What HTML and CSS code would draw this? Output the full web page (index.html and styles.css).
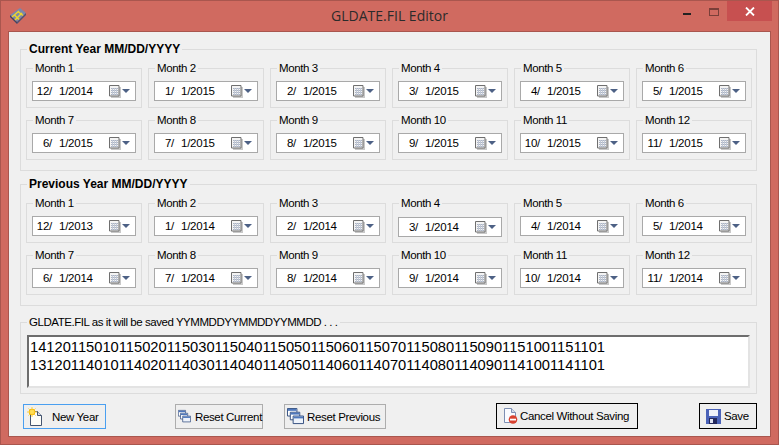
FILE: index.html
```html
<!DOCTYPE html>
<html lang="en">
<head>
<meta charset="utf-8">
<title>GLDATE.FIL Editor</title>
<link rel="stylesheet" href="styles.css">
</head>
<body>
<svg class="defs" width="0" height="0" aria-hidden="true">
  <symbol id="cal" viewBox="0 0 12 13">
    <path d="M2 2h10v11H2z" fill="#c9c9c9"/>
    <path d="M.5.5h9.5v10.5H.5z" fill="#f4f4f4" stroke="#6f6f6f"/>
    <path d="M2 3h7v1H2zM2 5h7v1H2zM2 7h7v1H2zM2 9h7v1H2z" fill="#aab3c4"/>
    <path d="M3 3h1v7H3zM5 3h1v7H5zM7 3h1v7H7z" fill="#c2c9d6"/>
  </symbol>
  <symbol id="windows" viewBox="0 0 18 18">
    <path d="M.5.5h10v8h-10z" fill="#fff" stroke="#2f4a7c"/><path d="M1 1h9v2H1z" fill="#4f78bd"/>
    <path d="M3.5 4.5h10v8h-10z" fill="#fff" stroke="#2f4a7c"/><path d="M4 5h9v2H4z" fill="#4f78bd"/>
    <path d="M6.5 8.5h11v8h-11z" fill="#eef3fb" stroke="#2f4a7c"/><path d="M7 9h10v2H7z" fill="#4f78bd"/>
  </symbol>
</svg>
<div class="window">
  <header class="titlebar">
    <svg class="appicon" width="17" height="16" viewBox="0 0 17 16" aria-hidden="true">
      <path d="M0 7 10 0l6 5-9 9z" fill="#7a88ad"/>
      <path d="M0 7l7 7v2L0 9z" fill="#3f4363"/>
      <path d="M7 14l9-9v2l-9 9z" fill="#4d5174"/>
      <path d="M2 9 9 3M5 12l7-7M4 6.5l5 5M8 3.5l5 4" fill="none" stroke="#ecd52c" stroke-width="1.5"/>
    </svg>
    <h1 class="title">GLDATE.FIL Editor</h1>
    <div class="controls">
      <span class="ctl-min"></span>
      <span class="ctl-max"></span>
      <span class="ctl-close">
        <svg width="10" height="9" viewBox="0 0 10 9" aria-hidden="true"><path d="M1 .5l8 8M9 .5l-8 8" stroke="#fff" stroke-width="1.8"/></svg>
      </span>
    </div>
  </header>
  <main class="client">
    <fieldset class="group">
      <legend class="group-title">Current Year MM/DD/YYYY</legend>
      <div class="months">
        <fieldset class="month"><legend>Month 1</legend><div class="date"><span class="m">12/</span><span class="y">1/2014</span><svg class="cal"><use href="#cal"/></svg><i class="arrow"></i></div></fieldset>
        <fieldset class="month"><legend>Month 2</legend><div class="date"><span class="m">1/</span><span class="y">1/2015</span><svg class="cal"><use href="#cal"/></svg><i class="arrow"></i></div></fieldset>
        <fieldset class="month"><legend>Month 3</legend><div class="date"><span class="m">2/</span><span class="y">1/2015</span><svg class="cal"><use href="#cal"/></svg><i class="arrow"></i></div></fieldset>
        <fieldset class="month"><legend>Month 4</legend><div class="date"><span class="m">3/</span><span class="y">1/2015</span><svg class="cal"><use href="#cal"/></svg><i class="arrow"></i></div></fieldset>
        <fieldset class="month"><legend>Month 5</legend><div class="date"><span class="m">4/</span><span class="y">1/2015</span><svg class="cal"><use href="#cal"/></svg><i class="arrow"></i></div></fieldset>
        <fieldset class="month"><legend>Month 6</legend><div class="date"><span class="m">5/</span><span class="y">1/2015</span><svg class="cal"><use href="#cal"/></svg><i class="arrow"></i></div></fieldset>
        <fieldset class="month"><legend>Month 7</legend><div class="date"><span class="m">6/</span><span class="y">1/2015</span><svg class="cal"><use href="#cal"/></svg><i class="arrow"></i></div></fieldset>
        <fieldset class="month"><legend>Month 8</legend><div class="date"><span class="m">7/</span><span class="y">1/2015</span><svg class="cal"><use href="#cal"/></svg><i class="arrow"></i></div></fieldset>
        <fieldset class="month"><legend>Month 9</legend><div class="date"><span class="m">8/</span><span class="y">1/2015</span><svg class="cal"><use href="#cal"/></svg><i class="arrow"></i></div></fieldset>
        <fieldset class="month"><legend>Month 10</legend><div class="date"><span class="m">9/</span><span class="y">1/2015</span><svg class="cal"><use href="#cal"/></svg><i class="arrow"></i></div></fieldset>
        <fieldset class="month"><legend>Month 11</legend><div class="date"><span class="m">10/</span><span class="y">1/2015</span><svg class="cal"><use href="#cal"/></svg><i class="arrow"></i></div></fieldset>
        <fieldset class="month"><legend>Month 12</legend><div class="date"><span class="m">11/</span><span class="y">1/2015</span><svg class="cal"><use href="#cal"/></svg><i class="arrow"></i></div></fieldset>
      </div>
    </fieldset>
    <fieldset class="group group-prev">
      <legend class="group-title">Previous Year MM/DD/YYYY</legend>
      <div class="months">
        <fieldset class="month"><legend>Month 1</legend><div class="date"><span class="m">12/</span><span class="y">1/2013</span><svg class="cal"><use href="#cal"/></svg><i class="arrow"></i></div></fieldset>
        <fieldset class="month"><legend>Month 2</legend><div class="date"><span class="m">1/</span><span class="y">1/2014</span><svg class="cal"><use href="#cal"/></svg><i class="arrow"></i></div></fieldset>
        <fieldset class="month"><legend>Month 3</legend><div class="date"><span class="m">2/</span><span class="y">1/2014</span><svg class="cal"><use href="#cal"/></svg><i class="arrow"></i></div></fieldset>
        <fieldset class="month"><legend>Month 4</legend><div class="date date-low"><span class="m">3/</span><span class="y">1/2014</span><svg class="cal"><use href="#cal"/></svg><i class="arrow"></i></div></fieldset>
        <fieldset class="month"><legend>Month 5</legend><div class="date"><span class="m">4/</span><span class="y">1/2014</span><svg class="cal"><use href="#cal"/></svg><i class="arrow"></i></div></fieldset>
        <fieldset class="month"><legend>Month 6</legend><div class="date"><span class="m">5/</span><span class="y">1/2014</span><svg class="cal"><use href="#cal"/></svg><i class="arrow"></i></div></fieldset>
        <fieldset class="month"><legend>Month 7</legend><div class="date"><span class="m">6/</span><span class="y">1/2014</span><svg class="cal"><use href="#cal"/></svg><i class="arrow"></i></div></fieldset>
        <fieldset class="month"><legend>Month 8</legend><div class="date"><span class="m">7/</span><span class="y">1/2014</span><svg class="cal"><use href="#cal"/></svg><i class="arrow"></i></div></fieldset>
        <fieldset class="month"><legend>Month 9</legend><div class="date"><span class="m">8/</span><span class="y">1/2014</span><svg class="cal"><use href="#cal"/></svg><i class="arrow"></i></div></fieldset>
        <fieldset class="month"><legend>Month 10</legend><div class="date"><span class="m">9/</span><span class="y">1/2014</span><svg class="cal"><use href="#cal"/></svg><i class="arrow"></i></div></fieldset>
        <fieldset class="month"><legend>Month 11</legend><div class="date"><span class="m">10/</span><span class="y">1/2014</span><svg class="cal"><use href="#cal"/></svg><i class="arrow"></i></div></fieldset>
        <fieldset class="month"><legend>Month 12</legend><div class="date"><span class="m">11/</span><span class="y">1/2014</span><svg class="cal"><use href="#cal"/></svg><i class="arrow"></i></div></fieldset>
      </div>
    </fieldset>
    <fieldset class="group group-file">
      <legend class="file-title">GLDATE.FIL as it will be saved YYMMDDYYMMDDYYMMDD . . .</legend>
      <div class="filebox">141201150101150201150301150401150501150601150701150801150901151001151101<br>131201140101140201140301140401140501140601140701140801140901141001141101</div>
    </fieldset>
    <div class="actions">
      <button class="btn btn-new" type="button">
        <svg width="16" height="19" viewBox="0 0 16 19" aria-hidden="true">
          <path d="M3.5 4.5h7l4 4v10h-11z" fill="#fdfdf8" stroke="#44546f"/>
          <path d="M10.5 4.5v4h4" fill="#d5dceb" stroke="#44546f"/>
          <circle cx="5" cy="5" r="3.2" fill="#f7b500"/>
          <path d="M5 0v10M0 5h10M1.5 1.5l7 7M8.5 1.5l-7 7" stroke="#fbd13e" stroke-width="1"/>
          <circle cx="5" cy="5" r="2" fill="#ffdf57"/>
        </svg>
        <span>New Year</span>
      </button>
      <button class="btn btn-current" type="button">
        <svg width="17" height="17" aria-hidden="true"><use href="#windows"/></svg>
        <span>Reset Current</span>
      </button>
      <button class="btn btn-previous" type="button">
        <svg width="17" height="17" aria-hidden="true"><use href="#windows"/></svg>
        <span>Reset Previous</span>
      </button>
      <button class="btn btn-strong btn-cancel" type="button">
        <svg width="14" height="16" viewBox="0 0 14 16" aria-hidden="true">
          <path d="M.5.5h7l4 4v10h-11z" fill="#fafbff" stroke="#7d8fb3"/>
          <path d="M7.5.5v4h4" fill="#d5dceb" stroke="#7d8fb3"/>
          <circle cx="9" cy="11.5" r="4.3" fill="#d8412f"/>
          <path d="M6 10.7h6v1.8H6z" fill="#fff"/>
        </svg>
        <span>Cancel Without Saving</span>
      </button>
      <button class="btn btn-strong btn-save" type="button">
        <svg width="15" height="15" viewBox="0 0 15 15" aria-hidden="true">
          <path d="M0 0h15v15H0z" fill="#4a62b8"/>
          <path d="M3 1h9v6H3z" fill="#eef1fa"/>
          <path d="M3 9h8v6H3z" fill="#23285c"/>
          <path d="M4 10h3v4H4z" fill="#dfe3f3"/>
        </svg>
        <span>Save</span>
      </button>
    </div>
  </main>
</div>
</body>
</html>
```
FILE: styles.css
```css
* { box-sizing: border-box; }
html, body { margin: 0; padding: 0; }
body {
  width: 779px;
  height: 445px;
  overflow: hidden;
  font-family: "Liberation Sans", Arial, sans-serif;
  font-size: 11.5px;
  color: #000;
}
.defs { position: absolute; }

.window {
  width: 779px;
  height: 445px;
  display: flex;
  flex-direction: column;
  background: #d06a60;
  border: 1px solid #a9564e;
}

.titlebar {
  height: 30px;
  flex: none;
  display: grid;
  grid-template-columns: 1fr auto 1fr;
  align-items: start;
}
.appicon { margin: 7px 0 0 9px; }
.title {
  margin: 6px 0 0;
  font-family: "Open Sans", sans-serif;
  font-size: 14px;
  line-height: 18px;
  font-weight: 400;
  color: #2b2b2b;
}
.controls {
  display: flex;
  justify-content: flex-end;
  align-items: flex-start;
  margin-right: 6px;
}
.ctl-min {
  width: 8px;
  height: 2px;
  margin: 12px 18px 0 0;
  background: #222;
}
.ctl-max {
  width: 10px;
  height: 8px;
  margin: 7px 8px 0 0;
  border: 1px solid #7a3f39;
  border-top-width: 2px;
}
.ctl-close {
  width: 45px;
  height: 20px;
  display: flex;
  align-items: center;
  justify-content: center;
  background: #c75050;
}

.client {
  flex: 1;
  margin: 0 7px 7px;
  padding: 10px 13px 0 11px;
  background: #f0f0f0;
  border: 1px solid #a9564e;
}

fieldset { margin: 0; min-width: 0; }
legend { padding: 0 2px; }

.group {
  border: 1px solid #dcdcdc;
  padding: 6px 4px 10px 5px;
}
.group-prev { margin-top: 6px; }
.group-title {
  margin-left: 1px;
  font-weight: 700;
  line-height: 14px;
  font-size: 12px;
}
.months {
  display: grid;
  grid-template-columns: repeat(6, 116px);
  column-gap: 6px;
  row-gap: 6px;
}
.month {
  border: 1px solid #dcdcdc;
  padding: 6px 5px 6px 5px;
  height: 46px;
}
.month legend {
  margin-left: 1px;
  line-height: 13px;
  letter-spacing: -0.4px;
}
.date {
  width: 104px;
  height: 20px;
  display: flex;
  align-items: center;
  background: #fff;
  border: 1px solid #a9a9a9;
  white-space: pre;
  letter-spacing: -0.25px;
}
.date-low { margin-top: 1px; }
.date .m {
  width: 18px;
  margin-left: 1px;
  text-align: right;
}
.date .y { margin-left: 7px; }
.cal {
  width: 12px;
  height: 13px;
  margin-left: auto;
}
.arrow {
  width: 0;
  height: 0;
  margin: 0 5px 0 1px;
  border-style: solid;
  border-width: 4px 4px 0;
  border-color: #4d6185 transparent transparent;
}

.group-file {
  margin-top: 9px;
  height: 79px;
  padding: 6px 6px 5px;
}
.file-title {
  margin-left: 0;
  line-height: 14px;
  letter-spacing: -0.45px;
}
.filebox {
  height: 53px;
  padding: 1px 0 0 1px;
  background: #fff;
  border: 2px solid;
  border-color: #6d6d6d #e3e3e3 #e3e3e3 #6d6d6d;
  font-size: 14.7px;
  line-height: 18px;
}

.actions {
  display: flex;
  align-items: flex-end;
  margin-top: 9px;
}
.btn {
  display: flex;
  align-items: center;
  height: 25px;
  padding: 0;
  font: inherit;
  letter-spacing: -0.35px;
  color: #000;
  background: #efefef;
  border: 1px solid #adadad;
  white-space: nowrap;
}
.btn-strong {
  height: 26px;
  border-color: #000;
}
.btn-new {
  width: 83px;
  margin-left: 3px;
  padding-left: 3px;
  gap: 9px;
  border-color: #4a9ff0;
}
.btn-current {
  width: 88px;
  margin-left: 69px;
  padding-left: 2px;
  gap: 4px;
}
.btn-previous {
  width: 102px;
  margin-left: 21px;
  padding-left: 2px;
  gap: 3px;
}
.btn-cancel {
  width: 142px;
  margin-left: 110px;
  padding-left: 7px;
  gap: 2px;
}
.btn-save {
  width: 58px;
  margin-left: 61px;
  padding-left: 6px;
  gap: 3px;
}
```
